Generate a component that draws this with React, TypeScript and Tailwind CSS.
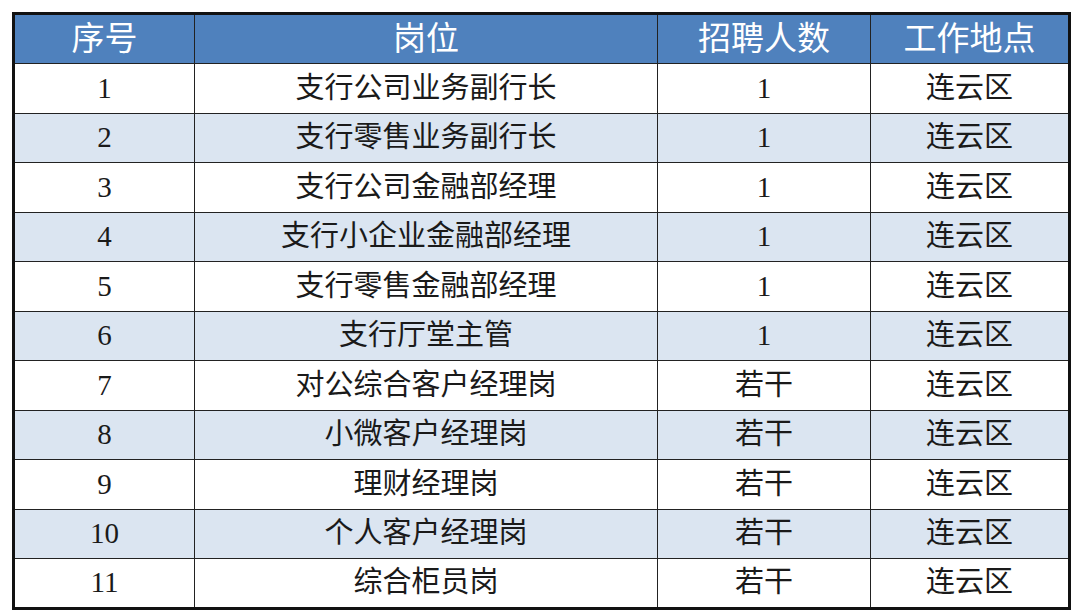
const rows: [string, string, string][] = [
  ["1", "支行公司业务副行长", "1"],
  ["2", "支行零售业务副行长", "1"],
  ["3", "支行公司金融部经理", "1"],
  ["4", "支行小企业金融部经理", "1"],
  ["5", "支行零售金融部经理", "1"],
  ["6", "支行厅堂主管", "1"],
  ["7", "对公综合客户经理岗", "若干"],
  ["8", "小微客户经理岗", "若干"],
  ["9", "理财经理岗", "若干"],
  ["10", "个人客户经理岗", "若干"],
  ["11", "综合柜员岗", "若干"],
];

const cjk = "font-['Liberation_Serif','Noto_Sans_CJK_SC',serif]";

export default function App() {
  return (
    <div className="w-[1080px] h-[614px] bg-white pt-[12px] pl-[12px]">
      <table
        className={`${cjk} table-fixed border-collapse border-[3px] border-[#111] text-[#1a1a1a]`}
      >
        <colgroup>
          <col className="w-[181px]" />
          <col className="w-[463px]" />
          <col className="w-[213px]" />
          <col className="w-[199px]" />
        </colgroup>
        <thead>
          <tr className="h-[50px] bg-[#4f81bd] text-white text-[33px] leading-none">
            <th className="border-[1.5px] border-[#222] font-normal">序号</th>
            <th className="border-[1.5px] border-[#222] font-normal">岗位</th>
            <th className="border-[1.5px] border-[#222] font-normal">招聘人数</th>
            <th className="border-[1.5px] border-[#222] font-normal">工作地点</th>
          </tr>
        </thead>
        <tbody>
          {rows.map(([no, post, count], i) => (
            <tr
              key={no}
              className={`h-[49.5px] text-[29px] leading-none ${i % 2 === 1 ? "bg-[#dbe5f1]" : "bg-white"}`}
            >
              <td className="border-[1.5px] border-[#222] text-center">{no}</td>
              <td className="border-[1.5px] border-[#222] text-center">{post}</td>
              <td className="border-[1.5px] border-[#222] text-center">{count}</td>
              <td className="border-[1.5px] border-[#222] text-center">连云区</td>
            </tr>
          ))}
        </tbody>
      </table>
    </div>
  );
}
